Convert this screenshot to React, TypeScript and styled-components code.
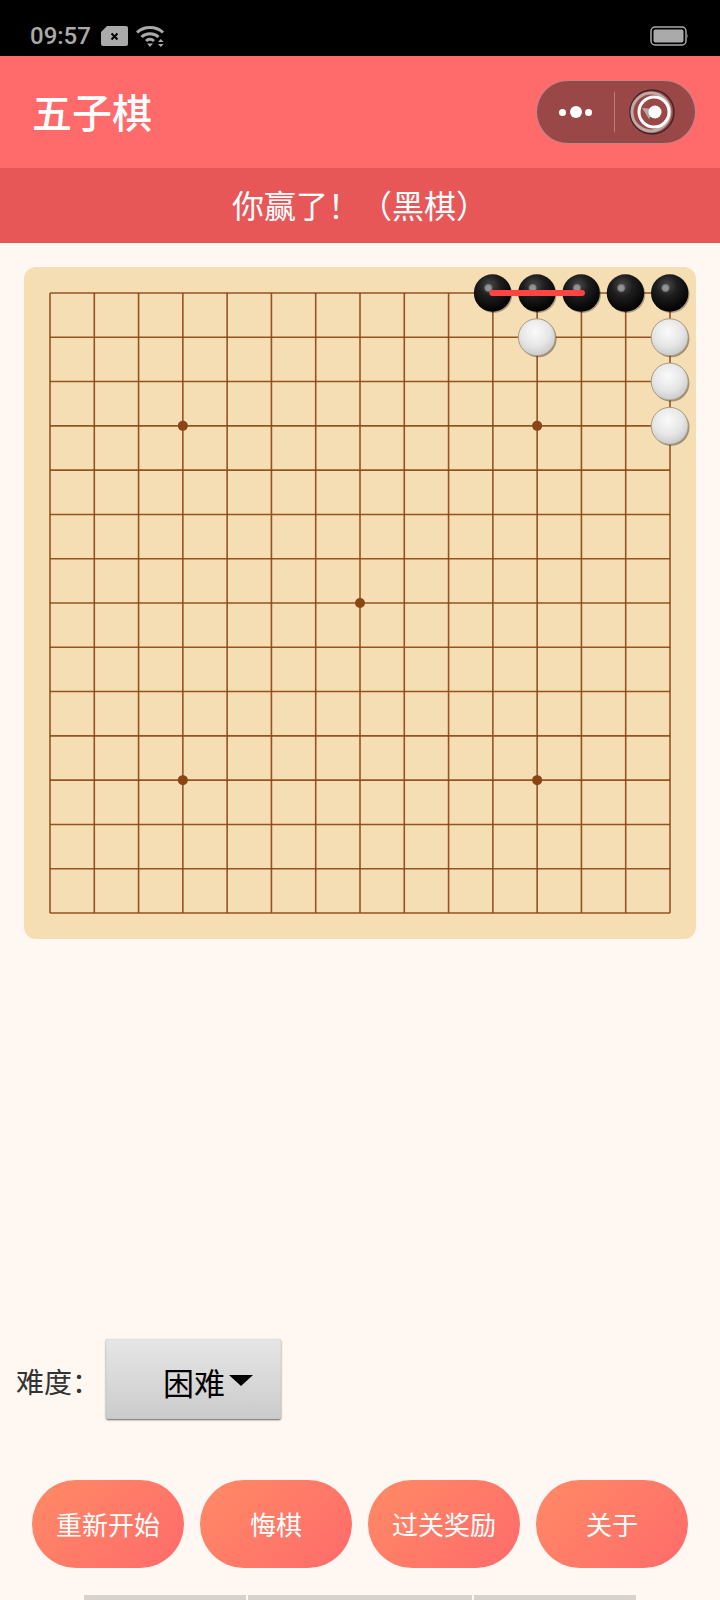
import React from "react";
import styled, { createGlobalStyle } from "styled-components";

const GlobalStyle = createGlobalStyle`
  html, body {
    margin: 0;
    padding: 0;
    background: #fff8f2;
    font-family: "Noto Sans CJK SC", "Noto Sans", sans-serif;
  }
`;

const Page = styled.div`
  width: 720px;
  height: 1600px;
  display: flex;
  flex-direction: column;
  overflow: hidden;
  background: #fff8f2;
`;

const StatusBar = styled.div`
  height: 56px;
  flex: none;
  box-sizing: border-box;
  background: #000;
  padding: 16px 32px 0 30px;
  display: flex;
  align-items: center;
  color: #aaa;
`;

const Time = styled.span`
  font-family: Roboto, sans-serif;
  font-size: 24px;
  font-weight: 500;
  line-height: 40px;
  margin-right: 10px;
`;

const StatusIcon = styled.svg`
  display: block;
  margin-right: 8px;
`;

const BatteryIcon = styled.svg`
  display: block;
  margin-left: auto;
`;

const Header = styled.header`
  height: 112px;
  flex: none;
  box-sizing: border-box;
  background: #ff6b6b;
  padding: 0 24px 2px 32px;
  display: flex;
  align-items: center;
  justify-content: space-between;
`;

const Title = styled.h1`
  margin: 0;
  color: #fff;
  font-size: 40px;
  font-weight: 500;
  line-height: 56px;
`;

const Capsule = styled.div`
  width: 160px;
  height: 64px;
  margin-top: 2px;
  box-sizing: border-box;
  border-radius: 32px;
  border: 1px solid rgba(255, 255, 255, 0.35);
  background: #9a4747;
  display: flex;
  align-items: center;
`;

const MoreDots = styled.div`
  width: 77px;
  display: flex;
  align-items: center;
  justify-content: center;
  gap: 3.5px;
`;

const Dot = styled.span<{ $size: number }>`
  width: ${(p) => p.$size}px;
  height: ${(p) => p.$size}px;
  border-radius: 50%;
  background: #fff;
`;

const CapsuleDivider = styled.span`
  width: 1px;
  height: 40px;
  background: rgba(255, 255, 255, 0.3);
`;

const TargetIcon = styled.svg`
  display: block;
  margin-left: 14px;
`;

const Banner = styled.div`
  height: 75px;
  flex: none;
  background: #e85757;
  color: #fff;
  font-size: 32px;
  line-height: 72px;
  text-align: center;
`;

const Main = styled.main`
  flex: 1;
  display: flex;
  flex-direction: column;
`;

const BoardPanel = styled.div`
  margin: 24px 24px 0;
  padding: 25px;
  height: 672px;
  box-sizing: border-box;
  border-radius: 12px;
  background: #f5deb3;
`;

const BoardSvg = styled.svg`
  display: block;
  overflow: visible;
`;

const DifficultyRow = styled.div`
  margin-top: auto;
  padding-left: 16px;
  display: flex;
  align-items: center;
  gap: 6px;
`;

const DifficultyLabel = styled.span`
  width: 84px;
  color: #333;
  font-size: 28px;
  line-height: 40px;
  padding-top: 3px;
`;

const SelectBox = styled.div`
  width: 175px;
  height: 80px;
  box-sizing: border-box;
  border-radius: 2px;
  background: linear-gradient(180deg, #e6e6e6 0%, #cbcbcb 100%);
  box-shadow: 0 1px 2px rgba(0, 0, 0, 0.6), inset 0 0 1px rgba(0, 0, 0, 0.25);
  color: #000;
  font-size: 31px;
  display: flex;
  align-items: center;
  padding: 5px 0 0 57px;
`;

const SelectArrow = styled.span`
  width: 0;
  height: 0;
  margin: -3px 0 0 4px;
  border-left: 12px solid transparent;
  border-right: 12px solid transparent;
  border-top: 11px solid #000;
`;

const ButtonRow = styled.div`
  margin-top: 61px;
  padding: 0 32px;
  display: flex;
  gap: 16px;
`;

const ActionButton = styled.button`
  flex: 1;
  height: 88px;
  padding: 0 0 2px;
  border: none;
  border-radius: 44px;
  background: linear-gradient(135deg, #ff8a65 0%, #ff6b6b 100%);
  color: #fff;
  font-family: inherit;
  font-size: 26px;
  cursor: pointer;
`;

const BottomBars = styled.div`
  margin-top: 27px;
  height: 5px;
  display: flex;
  justify-content: center;
  gap: 2px;
`;

const BottomBar = styled.span<{ $width: number }>`
  width: ${(p) => p.$width}px;
  background: #d8d2cd;
`;

const CELL = 620 / 14;
const OFFSET = 1;
const pos = (i: number) => OFFSET + i * CELL;
const stars = [[3, 3], [11, 3], [7, 7], [3, 11], [11, 11]];
const blackStones = [10, 11, 12, 13, 14].map((x) => [x, 0]);
const whiteStones = [[11, 1], [14, 1], [14, 2], [14, 3]];

const Board = () => (
  <BoardSvg width={622} height={622} viewBox="0 0 622 622">
    <defs>
      <radialGradient id="blackStone" cx="0.42" cy="0.3" r="0.72">
        <stop offset="0" stopColor="#4a4a4a" />
        <stop offset="0.4" stopColor="#1e1e1e" />
        <stop offset="1" stopColor="#000" />
      </radialGradient>
      <radialGradient id="highlight">
        <stop offset="0" stopColor="#9a9a9a" />
        <stop offset="0.65" stopColor="#8a8a8a" />
        <stop offset="1" stopColor="#8a8a8a" stopOpacity="0" />
      </radialGradient>
      <radialGradient id="whiteStone" cx="0.45" cy="0.35" r="0.72">
        <stop offset="0" stopColor="#fafafa" />
        <stop offset="0.55" stopColor="#e6e6e6" />
        <stop offset="1" stopColor="#c2c2c2" />
      </radialGradient>
    </defs>
    {Array.from({ length: 15 }, (_, i) => (
      <g key={i} stroke="#8b4513" strokeWidth={1.6} opacity={0.9}>
        <line x1={pos(0)} y1={pos(i)} x2={pos(14)} y2={pos(i)} />
        <line x1={pos(i)} y1={pos(0)} x2={pos(i)} y2={pos(14)} />
      </g>
    ))}
    {stars.map(([x, y]) => (
      <circle key={`${x}-${y}`} cx={pos(x)} cy={pos(y)} r={5} fill="#8b4513" />
    ))}
    {blackStones.map(([x, y]) => (
      <g key={x}>
        <circle cx={pos(x) + 1} cy={pos(y) + 1.5} r={18.5} fill="rgba(0,0,0,0.3)" />
        <circle cx={pos(x) - 0.3} cy={pos(y)} r={18.7} fill="url(#blackStone)" />
        <circle cx={pos(x) - 4.5} cy={pos(y) - 5} r={4.6} fill="url(#highlight)" />
      </g>
    ))}
    {whiteStones.map(([x, y]) => (
      <g key={`${x}-${y}`}>
        <circle cx={pos(x) + 1} cy={pos(y) + 1.5} r={18.5} fill="rgba(0,0,0,0.35)" />
        <circle cx={pos(x) - 0.3} cy={pos(y)} r={18.5} fill="url(#whiteStone)" stroke="#a89a80" strokeWidth={1} />
      </g>
    ))}
    <line
      x1={pos(10) - 0.5}
      y1={pos(0)}
      x2={pos(12) + 0.5}
      y2={pos(0)}
      stroke="#ff4444"
      strokeWidth={6}
      strokeLinecap="round"
    />
  </BoardSvg>
);

const buttons = ["重新开始", "悔棋", "过关奖励", "关于"];

const App = () => (
  <Page>
    <GlobalStyle />
    <StatusBar>
      <Time>09:57</Time>
      <StatusIcon width={27} height={20} viewBox="0 0 27 20">
        <path d="M6 0H25a2 2 0 0 1 2 2V18a2 2 0 0 1-2 2H2a2 2 0 0 1-2-2V6Z" fill="#aaa" />
        <path d="M10.5 7.5l6 6M16.5 7.5l-6 6" stroke="#000" strokeWidth={2} />
      </StatusIcon>
      <StatusIcon width={30} height={22} viewBox="0 0 30 22">
        <g fill="none" stroke="#aaa" strokeWidth={3}>
          <path d="M1 7.5C8 .8 20 .8 27 7.5" />
          <path d="M5.5 12C10 7.6 18 7.6 22.5 12" />
          <path d="M10 16c2.4-2.2 5.6-2.2 8 0" />
        </g>
        <path d="M11 18.5h6L14 22ZM22 17l2.8-3 2.8 3ZM22 19h5.6l-2.8 3Z" fill="#aaa" />
      </StatusIcon>
      <BatteryIcon width={38} height={20} viewBox="0 0 38 20">
        <rect x="1" y="1" width="35" height="18" rx="4" fill="none" stroke="#aaa" strokeWidth={1.5} />
        <rect x="3.5" y="3.5" width="30" height="13" rx="2" fill="#aaa" />
        <path d="M37 8.5v3" stroke="#777" strokeWidth={1.5} />
      </BatteryIcon>
    </StatusBar>
    <Header>
      <Title>五子棋</Title>
      <Capsule>
        <MoreDots>
          <Dot $size={7} />
          <Dot $size={12} />
          <Dot $size={7} />
        </MoreDots>
        <CapsuleDivider />
        <TargetIcon width={46} height={46} viewBox="0 0 46 46">
          <circle cx="23" cy="23" r="22" fill="none" stroke="#3f2424" strokeWidth={1.4} />
          <circle cx="22" cy="23" r="19" fill="none" stroke="#bfa8a8" strokeWidth={3} />
          <circle cx="25" cy="23" r="15" fill="none" stroke="#fff" strokeWidth={3} />
          <path d="M13 19 L27 20 L20 30Z" fill="#b9a5a5" />
          <circle cx="26" cy="23" r="6.5" fill="#fff" />
        </TargetIcon>
      </Capsule>
    </Header>
    <Banner>你赢了！（黑棋）</Banner>
    <Main>
      <BoardPanel>
        <Board />
      </BoardPanel>
      <DifficultyRow>
        <DifficultyLabel>难度：</DifficultyLabel>
        <SelectBox>
          困难
          <SelectArrow />
        </SelectBox>
      </DifficultyRow>
      <ButtonRow>
        {buttons.map((label) => (
          <ActionButton key={label}>{label}</ActionButton>
        ))}
      </ButtonRow>
      <BottomBars>
        <BottomBar $width={162} />
        <BottomBar $width={224} />
        <BottomBar $width={162} />
      </BottomBars>
    </Main>
  </Page>
);

export default App;
